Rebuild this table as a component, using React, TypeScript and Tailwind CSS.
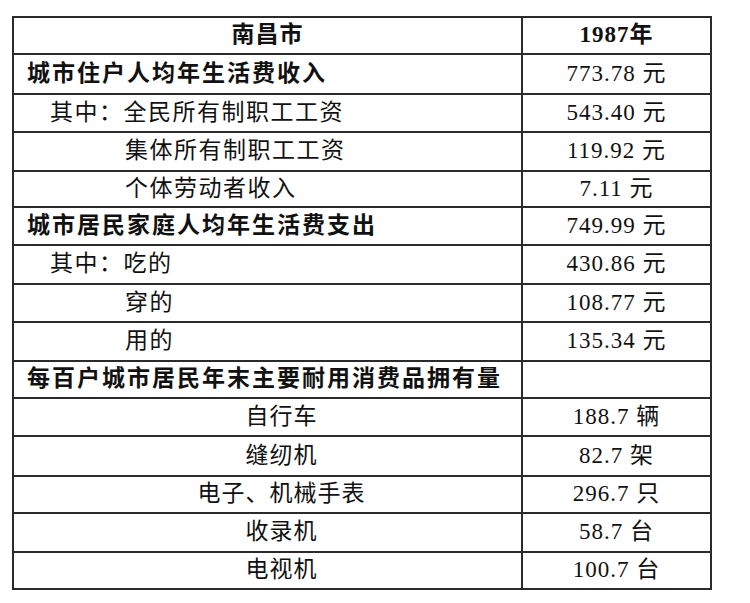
import React from "react";

type Row = {
  label: string;
  value: string;
  kind: "head" | "bold" | "l1" | "l2" | "center";
  h: string;
};

const rows: Row[] = [
  { label: "南昌市", value: "1987年", kind: "head", h: "h-[35px]" },
  { label: "城市住户人均年生活费收入", value: "773.78 元", kind: "bold", h: "h-[40px]" },
  { label: "其中：全民所有制职工工资", value: "543.40 元", kind: "l1", h: "h-[38px]" },
  { label: "集体所有制职工工资", value: "119.92 元", kind: "l2", h: "h-[39px]" },
  { label: "个体劳动者收入", value: "7.11 元", kind: "l2", h: "h-[36px]" },
  { label: "城市居民家庭人均年生活费支出", value: "749.99 元", kind: "bold", h: "h-[38px]" },
  { label: "其中：吃的", value: "430.86 元", kind: "l1", h: "h-[39px]" },
  { label: "穿的", value: "108.77 元", kind: "l2", h: "h-[38px]" },
  { label: "用的", value: "135.34 元", kind: "l2", h: "h-[39px]" },
  { label: "每百户城市居民年末主要耐用消费品拥有量", value: "", kind: "bold", h: "h-[37px]" },
  { label: "自行车", value: "188.7 辆", kind: "center", h: "h-[38px]" },
  { label: "缝纫机", value: "82.7 架", kind: "center", h: "h-[40px]" },
  { label: "电子、机械手表", value: "296.7 只", kind: "center", h: "h-[37px]" },
  { label: "收录机", value: "58.7 台", kind: "center", h: "h-[39px]" },
  { label: "电视机", value: "100.7 台", kind: "center", h: "h-[37px]" },
];

const leftClass: Record<Row["kind"], string> = {
  head: "justify-center font-bold tracking-[1px]",
  bold: "justify-start pl-[13px] font-bold tracking-[2px]",
  l1: "justify-start pl-[36px] tracking-[1.5px]",
  l2: "justify-start pl-[111px] tracking-[1.5px]",
  center: "justify-center pl-[28px] tracking-[1px]",
};

export default function App() {
  return (
    <div
      className="w-[750px] h-[603px] bg-white pt-[16px] pl-[12px] text-[#111111]"
      style={{ fontFamily: '"Liberation Serif", "Noto Sans CJK SC", serif' }}
    >
      <div className="w-[700px] border-2 border-[#2b2b2b] flex flex-col">
        {rows.map((r, i) => (
          <div
            key={i}
            className={`flex ${r.h} ${i > 0 ? "border-t-2 border-[#2b2b2b]" : ""}`}
          >
            <div className={`w-[507px] flex items-center text-[23px] ${leftClass[r.kind]}`}>
              {r.label}
            </div>
            <div
              className={`flex-1 border-l-2 border-[#2b2b2b] flex items-center justify-center text-[23px] tracking-[1px] ${
                r.kind === "head" ? "font-bold" : ""
              }`}
            >
              {r.value}
            </div>
          </div>
        ))}
      </div>
    </div>
  );
}
